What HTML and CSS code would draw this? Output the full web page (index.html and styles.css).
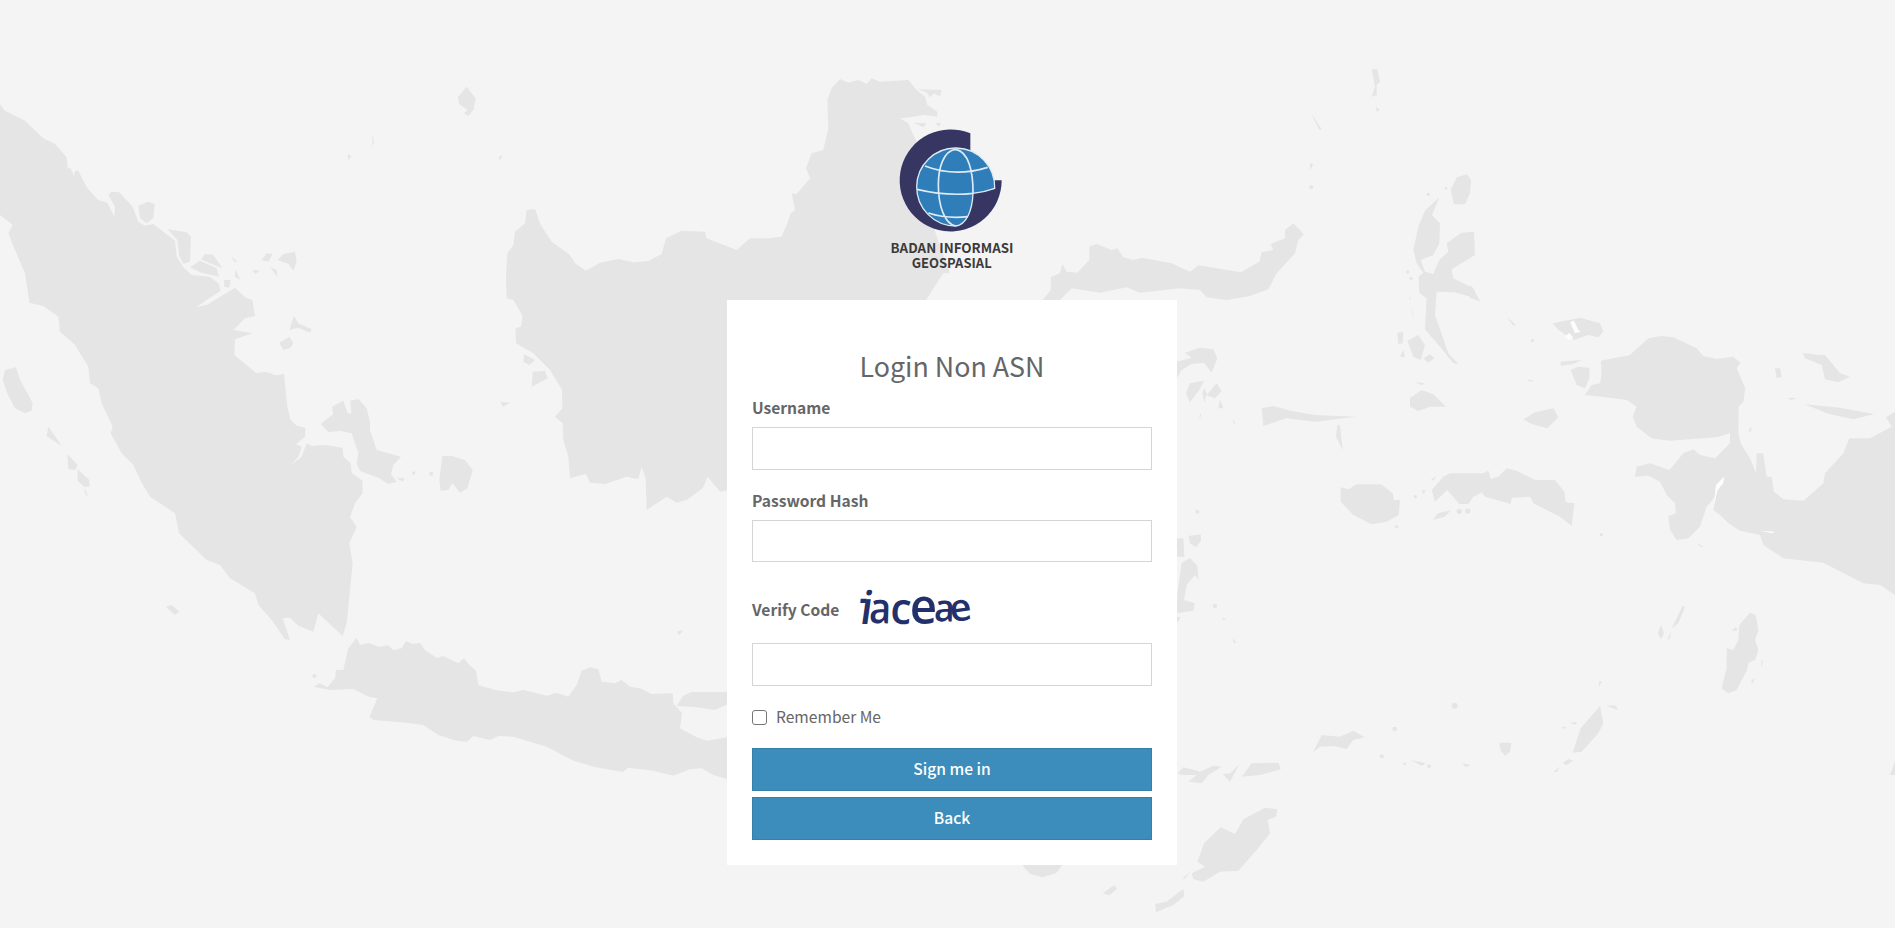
FILE: index.html
```html
<!DOCTYPE html>
<html lang="id">
<head>
<meta charset="utf-8">
<title>Login Non ASN</title>
<link rel="stylesheet" href="styles.css">
</head>
<body class="login-page">
<svg class="map" viewBox="0 0 1895 928" aria-hidden="true">
  <!-- Sumatra and nearby islands -->
  <g transform="translate(0 60) scale(.33333)">
    <path d="M0 133 15 152 75 182 130 235 165 252 200 292 203 325 212 325 222 348 225 332 235 332 262 385 295 420 322 428 343 470 345 440 325 405 335 395 358 397 398 440 415 485 435 497 460 492 525 542 530 590 550 622 575 645 630 650 655 670 662 692 590 740 620 735 705 683 735 712 757 720 765 768 735 775 700 810 758 820 705 838 703 885 770 940 795 935 830 946 852 942 862 1040 872 1080 890 1097 916 1103 915 1130 888 1153 905 1160 895 1190 872 1215 905 1190 920 1150 935 1158 975 1155 1028 1163 1030 1190 1052 1210 1055 1238 1087 1262 1088 1300 1065 1330 1050 1372 1070 1400 1048 1450 1058 1510 1050 1590 1040 1690 1028 1728 1003 1705 955 1660 940 1715 895 1697 870 1673 848 1675 870 1740 855 1738 815 1680 775 1635 765 1600 690 1555 660 1515 620 1500 537 1420 525 1360 450 1310 425 1268 400 1215 365 1180 332 1120 338 1100 305 1030 295 985 270 970 265 920 225 855 180 815 175 770 130 738 88 728 75 640 45 570 25 520 38 495 0 465Z"/>
    <path d="M415 437 445 425 464 432 460 475 440 490 420 475ZM503 508 560 517 573 530 570 605 550 612 538 588 532 540ZM570 622 600 602 650 625 657 650 600 637ZM603 598 615 582 640 585 668 625 630 610ZM695 588 712 605 702 605ZM705 628 722 660 705 650ZM672 660 692 660 688 683 673 680ZM785 600 800 580 818 582 805 605ZM833 600 850 582 885 575 890 605 880 632 866 612ZM758 630 780 632 765 642ZM810 622 830 630 832 650ZM882 768 895 790 935 808 930 818 895 803 868 810ZM838 848 868 830 880 850 870 865 850 870ZM1373 112 1400 80 1427 115 1420 150 1405 168 1392 160 1403 150 1378 133ZM1043 282 1054 288 1045 302ZM1117 220 1122 245 1117 260Z"/>
    <path d="M8 960 15 930 48 922 60 960 80 995 98 1030 95 1052 75 1060 45 1045 22 1000ZM145 1100 158 1118 185 1158 140 1128ZM202 1183 233 1215 225 1230 205 1228ZM233 1228 268 1260 268 1280 252 1280 233 1262ZM253 1285 266 1312 254 1300ZM498 1640 515 1635 538 1655 525 1665Z"/>
    <path d="M962 1092 1000 1062 996 1040 1030 1022 1043 1060 1055 1060 1050 1022 1075 1017 1100 1045 1110 1085 1110 1110 1130 1170 1203 1190 1180 1215 1173 1243 1190 1265 1165 1272 1135 1253 1080 1233 1070 1210 1075 1178 1055 1120 1020 1113 985 1116ZM1190 1254 1215 1255 1208 1265ZM1327 1188 1355 1188 1395 1200 1418 1230 1402 1285 1380 1298 1357 1270 1345 1290 1322 1292 1318 1260Z"/>
    <circle cx="1241" cy="1239" r="5"/><circle cx="1294" cy="1241" r="6"/><circle cx="943" cy="1848" r="6"/>
  </g>
  <!-- Java -->
  <g transform="translate(300 400) scale(.33333)">
    <path d="M40 860 60 850 82 862 105 835 108 810 130 810 145 745 170 714 180 735 205 728 235 740 265 736 280 750 305 745 318 724 340 732 360 728 375 750 410 774 430 768 475 790 492 775 508 795 528 812 535 855 585 870 640 877 670 870 740 887 770 878 805 890 830 855 845 812 870 802 895 808 905 845 945 850 965 840 990 860 1020 865 1055 882 1118 880 1120 910 1146 940 1140 985 1190 1012 1220 1022 1290 1010 1290 1140 1240 1125 1205 1105 1170 1108 1120 1127 1060 1112 985 1103 968 1116 880 1100 820 1082 740 1040 640 1010 595 1008 570 1020 520 1008 500 1025 470 1022 415 1005 370 975 320 968 220 960 208 950 232 895 205 890 160 867 90 870ZM1130 918 1150 887 1175 876 1290 876 1290 910 1245 930 1190 922ZM603 8 622 10 608 20ZM1130 695 1150 690 1138 706Z"/>
  </g>
  <!-- Kalimantan -->
  <g transform="translate(480 60) scale(.33333)">
    <path d="M140 450 165 447 182 495 215 545 270 585 285 610 318 632 360 608 415 597 460 607 505 603 545 582 558 535 605 512 675 515 680 535 770 570 810 535 865 535 905 530 922 490 932 460 945 450 935 400 950 402 990 355 978 325 995 280 1030 270 1045 205 1042 120 1055 85 1080 57 1105 68 1135 60 1160 72 1175 55 1200 65 1285 60 1310 90 1335 110 1342 135 1372 155 1372 170 1330 165 1290 172 1260 175 1285 190 1300 225 1310 245 1360 500 1410 640 1390 640 1370 670 1335 725 900 1240 745 1290 720 1295 683 1250 668 1285 620 1320 590 1328 560 1310 500 1350 497 1255 485 1220 475 1258 440 1250 375 1272 330 1268 318 1242 270 1255 265 1190 250 1140 248 1090 225 1070 247 1045 246 990 210 930 160 880 108 850 106 805 123 800 128 768 100 720 80 715 78 650 82 580 100 555 105 515 135 490ZM132 882 165 900 148 915 130 905ZM158 935 195 932 203 955 155 980ZM62 1025 90 1028 70 1040ZM55 293 68 283 62 300ZM1312 88 1385 90 1380 110 1362 100 1350 112 1340 97ZM1300 188 1340 190 1330 202ZM1365 190 1382 188 1378 200Z"/>
  </g>
  <!-- Sulawesi, Halmahera -->
  <g transform="translate(1000 60) scale(.33333)">
    <path d="M128 720 152 690 153 650 180 640 187 612 200 635 232 638 268 600 268 560 290 552 335 570 352 565 370 592 400 600 425 593 515 610 570 635 595 616 722 637 778 605 785 577 820 570 812 552 855 535 855 510 880 490 912 523 895 540 885 580 830 640 805 688 750 708 680 720 620 712 600 690 540 685 420 698 380 682 300 698 215 685 180 720ZM530 905 575 893 555 878 600 863 640 868 652 895 635 938 612 908 575 912 545 930 530 955ZM558 1000 570 970 612 962 598 990 570 1027ZM612 985 622 1003 650 970 665 993 645 1015 618 1005 614 1030 607 1000ZM660 1018 670 1045 655 1045ZM785 1045 820 1038 870 1052 945 1065 1068 1070 945 1085 860 1075 790 1098ZM1012 1095 1020 1095 1028 1170 1008 1130ZM698 1078 708 1092 700 1090ZM600 1060 604 1065 598 1078Z"/>
    <path d="M1115 28 1132 28 1140 65 1130 75 1130 105 1115 110 1125 80ZM932 158 965 208 958 210ZM930 310 940 312 930 330ZM1128 140 1140 150 1130 155Z"/>
    <path d="M1352 390 1370 352 1400 343 1413 360 1410 400 1395 433 1362 433ZM1240 570 1255 500 1275 452 1318 412 1296 465 1320 490 1318 550 1300 585 1262 600 1275 635 1300 642 1318 600 1345 575 1340 550 1385 518 1422 515 1425 585 1355 628 1360 655 1420 685 1440 725 1410 710 1365 697 1310 695 1305 765 1345 880 1375 912 1360 910 1320 860 1275 808 1280 715 1258 700 1256 650 1270 638 1250 610ZM1192 818 1210 815 1208 850 1195 852ZM1222 842 1255 825 1275 855 1262 900 1240 890ZM1200 890 1210 870 1215 892ZM1270 895 1290 883 1303 895 1285 908ZM1230 1015 1265 990 1300 1003 1338 1040 1290 1040 1255 1053 1230 1040ZM1243 967 1275 970 1265 975ZM1228 710 1233 715 1231 722ZM1232 740 1242 775 1237 765Z"/>
    <circle cx="934" cy="382" r="6"/><circle cx="1285" cy="403" r="5"/><circle cx="1223" cy="636" r="5"/><circle cx="1233" cy="655" r="5"/><circle cx="1338" cy="385" r="4"/>
  </g>
  <!-- Buru, Seram -->
  <g transform="translate(1170 330) scale(.33333)">
    <path d="M512 472 535 478 560 463 633 463 668 490 672 510 690 510 686 555 650 575 605 583 550 555 512 515ZM820 440 840 430 940 430 955 422 962 447 985 440 1010 415 1040 422 1095 450 1155 450 1183 485 1187 517 1213 520 1205 588 1170 560 1090 520 1080 500 1025 503 1022 522 945 500 935 487 910 500 895 522 868 522 832 480 795 515 785 480ZM788 570 805 550 843 540 825 560ZM783 448 800 438 790 452ZM755 480 768 482 760 492ZM56 618 92 613 93 632 78 652 60 640ZM20 625 40 625 43 680 20 680ZM35 700 60 683 82 708 86 750 75 735 50 765 42 810 75 820 70 842 20 850 22 790ZM20 860 32 862 20 880Z"/>
    <circle cx="736" cy="500" r="5"/><circle cx="680" cy="590" r="5"/><circle cx="868" cy="544" r="8"/><circle cx="893" cy="543" r="8"/><circle cx="82" cy="545" r="6"/><circle cx="134" cy="827" r="6"/>
  </g>
  <!-- Papua -->
  <g transform="translate(1470 280) scale(.33333)">
    <path d="M392 242 480 225 535 175 575 168 610 172 680 205 700 228 740 237 790 230 812 248 800 265 826 325 820 365 806 380 805 460 812 490 840 535 858 578 860 520 880 520 890 590 905 590 912 635 940 658 1000 662 1060 610 1065 580 1120 520 1138 475 1200 475 1265 440 1248 412 1275 395 1275 945 1230 915 1180 910 1060 848 940 835 880 795 870 765 810 752 775 730 750 705 730 690 740 640 765 590 740 615 735 650 710 680 690 740 655 775 620 780 600 750 595 708 618 700 615 670 590 645 570 605 535 587 495 590 500 560 540 550 598 570 640 520 670 508 690 525 735 535 765 505 780 490 780 460 740 472 600 482 545 475 500 440 488 410 500 380 470 360 395 350 345 345 365 315 390 310 395 280ZM248 130 330 113 390 130 400 155 385 172 355 165 312 180 265 150ZM272 245 335 240 310 252 272 258ZM302 270 325 260 358 263 358 295 345 325 320 315ZM160 418 195 397 250 385 265 412 232 445 185 432ZM998 218 1045 225 1065 225 1110 280 1140 290 1105 307 1065 298 1055 255 1005 235ZM1005 373 1110 383 1212 402 1150 418 1070 400ZM915 265 930 265 935 290 920 295ZM950 354 982 354 965 360ZM0 15 10 25 12 55 38 65 0 55ZM110 110 138 135 130 137ZM170 298 193 302 180 305ZM836 448 846 442 841 460ZM680 790 702 800 690 800Z"/>
    <circle cx="187" cy="182" r="5"/><circle cx="394" cy="764" r="5"/>
    <path class="glint" d="M300 126 312 122 325 150 333 155 315 160ZM285 170 298 158 310 175 295 180ZM735 640 738 615 762 590 760 610 742 630 732 675ZM870 752 915 755 905 760Z"/>
  </g>
  <!-- Nusa Tenggara -->
  <g transform="translate(1000 600) scale(.33333)">
    <path d="M66 794H188L168 820 127 832 90 822ZM308 880 342 856 352 866 328 886ZM466 912 500 905 550 866 553 888 520 915 468 937ZM548 835 570 815 555 837ZM575 820 615 800 592 785 612 730 662 682 705 702 730 658 795 623 832 628 828 650 803 660 810 700 770 750 715 812 660 815 610 845 580 838ZM533 520 550 502 575 508 600 515 640 497 665 500 625 525 605 550 565 545 590 525 545 525ZM668 522 690 520 718 493 690 545ZM725 530 755 490 835 488 842 508 780 525ZM940 455 965 405 1020 410 1060 392 1095 412 1060 420 1040 447 1000 438 960 440ZM1232 480 1278 490 1265 497ZM1208 490 1220 487 1215 497ZM1385 492 1412 496 1398 500ZM698 115 710 130 700 128ZM665 52 680 58 670 60Z"/>
    <circle cx="1364" cy="317" r="9"/><circle cx="1184" cy="387" r="7"/><circle cx="1145" cy="469" r="6"/><circle cx="1287" cy="499" r="6"/><circle cx="645" cy="18" r="6"/>
  </g>
  <!-- Tanimbar, Aru -->
  <g transform="translate(1460 560) scale(.33333)">
    <path d="M118 548H154L150 575 135 587 122 572ZM338 578 362 505 405 455 420 437 430 490 415 520 365 575ZM440 436 468 437 474 450 450 442ZM308 610 325 597 340 602 320 615ZM280 635 300 620 290 636ZM330 488 352 486 345 494ZM305 500 320 502 312 507ZM785 385 800 325 800 265 820 270 835 240 838 195 870 158 887 165 895 210 885 240 895 270 885 300 865 308 862 328 848 355 830 390 805 400ZM815 212 828 200 832 212ZM905 300 910 305 903 325ZM875 360 885 355 875 375ZM593 220 603 195 612 220 603 238ZM635 205 668 138 675 140 655 190ZM622 240 632 215 630 235ZM1305 605V645L1290 645ZM418 362 426 365 415 382ZM10 610 33 616 18 620Z"/>
  </g>
</svg>

<main class="login-box">
  <svg class="logo" viewBox="0 0 540 540" role="img" aria-label="Badan Informasi Geospasial">
    <path fill="#373662" d="M331 70A153 153 0 1 0 425 211H402L404 236 340 250 331 118Z"/>
    <path class="globe" d="M404 235A117 117 0 1 0 287 348C320 345 337 300 339 250 372 247 404 235 404 235Z"/>
    <path class="grid" d="M287 118C250 122 235 175 235 225 235 290 255 342 287 348M287 118C325 124 340 185 339 250M195 168Q285 203 383 172M171 238Q260 259 339 250M205 309Q260 327 323 320"/>
    <text x="276" y="429" textLength="369" lengthAdjust="spacingAndGlyphs">BADAN INFORMASI</text>
    <text x="275" y="474" textLength="240" lengthAdjust="spacingAndGlyphs">GEOSPASIAL</text>
  </svg>

  <form class="card">
    <h1 class="title">Login Non ASN</h1>
    <div class="field">
      <label class="label" for="user">Username</label>
      <input class="input" id="user" type="text">
    </div>
    <div class="field">
      <label class="label" for="pass">Password Hash</label>
      <input class="input input-short" id="pass" type="password">
    </div>
    <div class="field">
      <div class="verify-row">
        <label class="label" for="code">Verify Code</label>
        <svg class="captcha" viewBox="410 30 360 150" role="img" aria-label="iaceae">
          <text font-size="138" transform="translate(418 162) skewX(-8)" textLength="36" lengthAdjust="spacingAndGlyphs">i</text>
          <path d="M424 86h18l-3 13h-16z"/>
          <text font-size="128" transform="translate(448 158) rotate(2)" textLength="66" lengthAdjust="spacingAndGlyphs">a</text>
          <text font-size="130" transform="translate(511 160) rotate(3)" textLength="63" lengthAdjust="spacingAndGlyphs">c</text>
          <text font-size="146" transform="translate(571 162)" textLength="82" lengthAdjust="spacingAndGlyphs">e</text>
          <text font-size="114" transform="translate(643 153) rotate(2)" textLength="62" lengthAdjust="spacingAndGlyphs">a</text>
          <text font-size="114" transform="translate(696 157) rotate(-8)" textLength="66" lengthAdjust="spacingAndGlyphs">e</text>
        </svg>
      </div>
      <input class="input" id="code" type="text">
    </div>
    <label class="remember"><input class="check" type="checkbox">Remember Me</label>
    <button class="btn" type="button">Sign me in</button>
    <button class="btn" type="button">Back</button>
  </form>
</main>
</body>
</html>
```
FILE: styles.css
```css
* { box-sizing: border-box; }

.login-page {
  margin: 0;
  height: 928px;
  overflow: hidden;
  background: #f4f4f4;
  color: #666;
  font-family: "Noto Sans CJK SC", "Open Sans", sans-serif;
  font-size: 15.6px;
  line-height: 25px;
}

/* Map lies behind the login box */
.map {
  position: absolute;
  top: 0;
  left: 0;
  width: 1895px;
  height: 928px;
  fill: #e5e5e5;
}
.glint { fill: #fdfdfd; }

.login-box {
  position: relative;
  display: flex;
  flex-direction: column;
  align-items: center;
  width: 450px;
  margin-left: 727px;
  padding-top: 110px;
}

.logo {
  display: block;
  width: 180px;
  height: 180px;
  margin: 0 4px 10px 0;
}
.logo text {
  font: 700 41px "Noto Sans CJK SC", sans-serif;
  fill: #3b3b3b;
  text-anchor: middle;
}
.globe { fill: #2f7db9; stroke: #dcebf7; stroke-width: 4; }
.grid { fill: none; stroke: #dcebf7; stroke-width: 5; }

.card {
  display: flex;
  flex-direction: column;
  width: 450px;
  height: 565px;
  padding: 49px 25px 0;
  background: #fff;
}

.title {
  margin: 0 0 12px;
  font-size: 26.8px;
  font-weight: 400;
  line-height: 34px;
  text-align: center;
}

.field {
  display: flex;
  flex-direction: column;
  gap: 7px;
  margin-bottom: 18px;
}
.label { font-weight: 700; }

.input {
  width: 400px;
  height: 43px;
  padding: 7px 15px;
  border: 1px solid #d3d5d9;
  border-radius: 0;
  background: #fff;
}
.input-short { height: 42px; margin-bottom: 1px; }

.verify-row {
  display: flex;
  align-items: flex-end;
  gap: 17px;
  height: 55px;
}
.verify-row .label { margin-bottom: 14px; }
.captcha {
  width: 120px;
  height: 50px;
  margin-bottom: 6px;
  overflow: visible;
  fill: #22306b;
}
.captcha text { font-family: "Open Sans", sans-serif; font-weight: 600; }

.remember {
  display: flex;
  align-items: center;
  gap: 9px;
  margin-bottom: 19px;
}
.check {
  width: 15px;
  height: 15px;
  margin: 2px 0 0;
  appearance: none;
  border: 1px solid #767676;
  border-radius: 3px;
  background: #fff;
}

.btn {
  flex: none;
  height: 43px;
  margin-bottom: 6px;
  padding: 0 0 2px;
  border: 1px solid #367fa9;
  background: #3c8dbc;
  color: #fff;
  font: inherit;
  font-weight: 500;
}
```
